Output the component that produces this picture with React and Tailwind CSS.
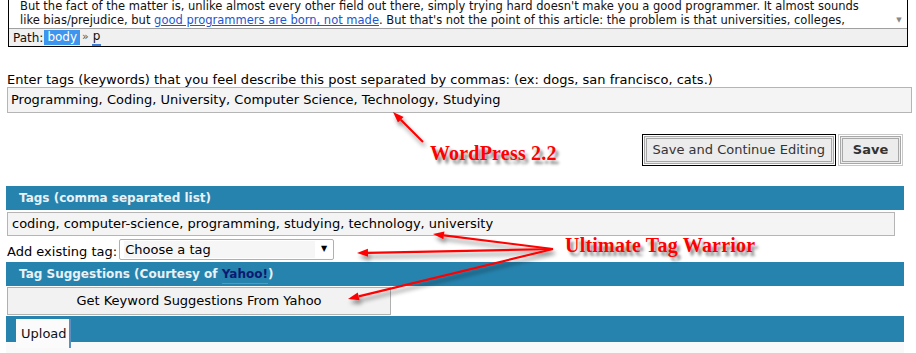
import React from 'react';

const font = "font-['DejaVu_Sans','Verdana',sans-serif]";

const Arrow = ({ x1, y1, x2, y2 }) => {
  // tip is (x2, y2)
  const dx = x2 - x1;
  const dy = y2 - y1;
  const len = Math.hypot(dx, dy);
  const ux = dx / len;
  const uy = dy / len;
  const hl = 11;
  const hw = 4;
  const bx = x2 - ux * hl;
  const by = y2 - uy * hl;
  const pts = `${x2},${y2} ${bx - uy * hw},${by + ux * hw} ${bx + uy * hw},${by - ux * hw}`;
  return (
    <g>
      <line x1={x1} y1={y1} x2={bx} y2={by} stroke="#ff0000" strokeWidth="2.2" />
      <polygon points={pts} fill="#ff0000" />
    </g>
  );
};

const Annotations = () => (
  <>
    <svg className="absolute left-0 top-0 pointer-events-none" width="916" height="353">
      <defs>
        <filter id="sh" x="-20%" y="-20%" width="140%" height="140%">
          <feDropShadow dx="2" dy="4" stdDeviation="2" floodColor="#000" floodOpacity="0.45" />
        </filter>
      </defs>
      <g filter="url(#sh)">
        <Arrow x1={423} y1={142} x2={393} y2={112} />
        <Arrow x1={553} y1={249} x2={433} y2={234} />
        <Arrow x1={553} y1={249} x2={357} y2={253} />
        <Arrow x1={553} y1={249} x2={348} y2={299} />
      </g>
    </svg>
    <div className="absolute left-[430px] top-[141px] font-['Liberation_Serif',serif] font-bold text-[20px] leading-[24px] text-[#ff0000] tracking-[0.2px] [text-shadow:3px_4px_3px_rgba(0,0,0,0.45)]">
      WordPress 2.2
    </div>
    <div className="absolute left-[565px] top-[233px] font-['Liberation_Serif',serif] font-bold text-[20px] leading-[24px] text-[#ff0000] tracking-[0.2px] [text-shadow:3px_4px_3px_rgba(0,0,0,0.45)]">
      Ultimate Tag Warrior
    </div>
  </>
);

export default function App() {
  return (
    <div className={`relative w-[916px] h-[353px] overflow-hidden bg-white text-black ${font}`}>
      {/* editor box, scrolled */}
      <div className="ml-2 w-[900px] border border-t-0 border-black">
        <div className="flex h-[28px] overflow-hidden bg-white">
          <div className="flex-1 pl-[11px] -mt-[1px] text-[11.5px] leading-[14px] text-[#111] whitespace-nowrap">
            <p>But the fact of the matter is, unlike almost every other field out there, simply trying hard doesn't make you a good programmer. It almost sounds</p>
            <p>
              like bias/prejudice, but{' '}
              <span className="text-[#2255cc] underline">good programmers are born, not made</span>. But that's not the point of this article: the problem is that universities, colleges,
            </p>
          </div>
          <div className="w-[16px] flex justify-center pt-[15px] text-[7px] text-[#888]">▼</div>
        </div>
        <div className="h-[18px] border-t border-[#a0a0a0] bg-[#f0f0f0] flex items-center pl-[4px] text-[12px] text-[#111]">
          <span>Path:</span>
          <span className="ml-[1px] px-[3px] bg-[#3d95ee] text-white leading-[15px]">body</span>
          <span className="ml-[2px] text-[#555] text-[11px]">»</span>
          <span className="ml-[3px] px-[1px] border-b-2 border-[#3d7fd9] leading-[15px]">p</span>
        </div>
      </div>

      {/* WordPress tags */}
      <div className="pl-[7px] pt-[26px] text-[13px] leading-[14px]">
        Enter tags (keywords) that you feel describe this post separated by commas: (ex: dogs, san francisco, cats.)
      </div>
      <div className="ml-[7px] w-[905px] h-[26px] border border-[#b5b5b5] bg-[#f4f4f4] flex items-center pl-[3px] text-[13px]">
        Programming, Coding, University, Computer Science, Technology, Studying
      </div>

      {/* save buttons */}
      <div className="flex justify-end gap-[2px] pr-[13px] mt-[21px]">
        <div className="border border-black p-px">
          <div className="h-[28px] px-[6px] border-[3px] border-double border-[#a8a8a8] bg-[#ececec] flex items-center text-[13px] text-[#333]">
            Save and Continue Editing
          </div>
        </div>
        <div className="border border-[#c8c8c8] p-px">
          <div className="h-[28px] w-[61px] border-[3px] border-double border-[#a8a8a8] bg-[#ececec] flex items-center justify-center text-[13px] font-bold text-[#333]">
            Save
          </div>
        </div>
      </div>

      {/* UTW box */}
      <div className="ml-[6px] w-[898px] mt-[20px]">
        <div className="h-[24px] bg-[#2683ae] flex items-center pl-[13px] text-[12px] font-bold text-[#e8f1f6]">
          Tags (comma separated list)
        </div>
        <div className="ml-px mt-[2px] w-[888px] h-[24px] border border-[#b5b5b5] bg-[#f4f4f4] flex items-center pl-[4px] text-[13px]">
          coding, computer-science, programming, studying, technology, university
        </div>
        <div className="h-[26px] flex items-center pl-px text-[13px]">
          <span className="pt-[6px]">Add existing tag:</span>
          <div className="ml-[2px] w-[215px] h-[21px] border border-[#b0b0b0] rounded-[2px] bg-white flex items-center pl-[4px] pr-[6px]">
            <span className="flex-1 bg-[#f6f6f6] leading-[17px] pl-px">Choose a tag</span>
            <span className="ml-[6px] text-[8px] text-black">▼</span>
          </div>
        </div>
        <div className="h-[24px] bg-[#2683ae] flex items-center pl-[13px] text-[12px] font-bold text-[#e8f1f6]">
          Tag Suggestions (Courtesy of&nbsp;<span className="text-[#0a1a70] border-b border-[#6c8fb0]">Yahoo!</span>)
        </div>
        <div className="ml-px mt-px w-[384px] h-[28px] border border-[#b0b0b0] bg-[#f2f2f2] flex items-center justify-center text-[13px]">
          Get Keyword Suggestions From Yahoo
        </div>
        <div className="mt-px h-[26px] bg-[#2683ae] flex items-end pl-[10px]">
          <div className="w-[55px] h-[29px] -mb-[6px] bg-[#fbfbfb] border-r-2 border-[#5b8fc0] pl-[5px] pt-[7px] text-[13px] leading-[16px] text-[#111]">
            Upload
          </div>
        </div>
        <div className="h-[12px] bg-[#f9f9f9]" />
      </div>

      <Annotations />
    </div>
  );
}
